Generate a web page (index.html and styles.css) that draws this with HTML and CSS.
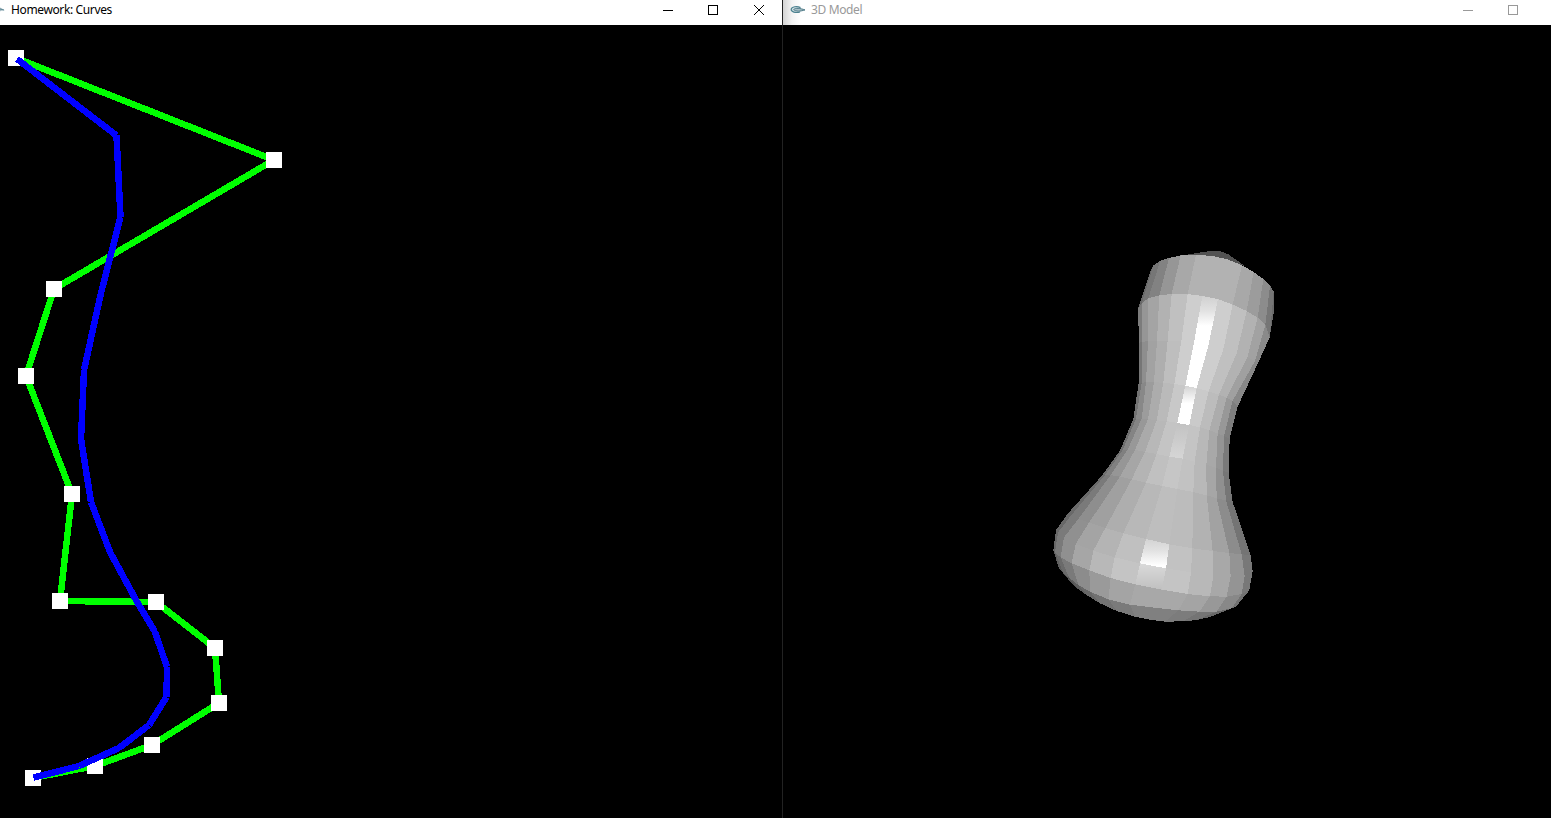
FILE: index.html
```
<!DOCTYPE html>
<html lang="en">
<head>
<meta charset="utf-8">
<title>Homework: Curves</title>
<link rel="stylesheet" href="styles.css">
</head>
<body>
<main class="desktop">
  <section class="window window-curves">
    <header class="titlebar">
      <svg class="app-icon" viewBox="0 0 16 16"><path d="M10.5 5.2 12.5 6.2 15.8 8.2 12 8.8 10.5 10Z" fill="#a3bac3"/><path d="M11 7 15 8" stroke="#5d8794" stroke-width="1"/></svg>
      <h1 class="title">Homework: Curves</h1>
      <div class="controls">
        <svg class="control" viewBox="0 0 45 18"><path d="M17 9.5h10"/></svg>
        <svg class="control" viewBox="0 0 45 18"><path d="M17.5 4.5h9v9h-9z"/></svg>
        <svg class="control control-close" viewBox="0 0 46 18"><path d="M18 4 28 14M28 4 18 14"/></svg>
      </div>
    </header>
    <svg class="canvas" id="curves" viewBox="0 25 782 793"></svg>
  </section>
  <section class="window window-model">
    <header class="titlebar titlebar-inactive">
      <svg class="app-icon" viewBox="0 0 16 16"><path d="M10.5 5.6C7 3.8 1.6 4.6 1.2 7.2 1 9.8 5.5 11.3 10 10" fill="#d3e2e6" stroke="#4c8290" stroke-width="1.2"/><path d="M3.6 7.6C5.5 5.6 10 6.2 15 7.9 10.5 9.4 6 9.8 3.6 7.6Z" fill="#a9bfc7" stroke="#4f7b88" stroke-width="1"/></svg>
      <h1 class="title">3D Model</h1>
      <div class="controls">
        <svg class="control" viewBox="0 0 45 18"><path d="M17 9.5h10"/></svg>
        <svg class="control" viewBox="0 0 45 18"><path d="M17.5 4.5h9v9h-9z"/></svg>
      </div>
    </header>
    <svg class="canvas" id="model" viewBox="783 25 768 793">
      <defs>
        <linearGradient id="shine-top" x2="0" y2="1"><stop stop-color="#d0d0d0"/><stop offset=".3" stop-color="#e2e2e2"/><stop offset=".6" stop-color="#fff"/></linearGradient>
        <linearGradient id="shine-mid" x2="0" y2="1"><stop stop-color="#d2d2d2"/><stop offset=".45" stop-color="#fff"/></linearGradient>
        <linearGradient id="shine-neck" x2="0" y2="1"><stop stop-color="#c2c2c2"/><stop offset="1" stop-color="#d6d6d6"/></linearGradient>
        <linearGradient id="shine-base" x2="0" y2="1"><stop stop-color="#d3d3d3"/><stop offset=".4" stop-color="#e2e2e2"/><stop offset=".9" stop-color="#fff"/></linearGradient>
        <linearGradient id="shine-low" x2="0" y2="1"><stop stop-color="#dadada"/><stop offset="1" stop-color="#c0c0c0"/></linearGradient>
      </defs>
    </svg>
  </section>
</main>
<script src="scene.js"></script>
</body>
</html>
```
FILE: styles.css
```
* { box-sizing: border-box; }
body { margin: 0; background: #000; font-family: "Noto Sans", "Open Sans", sans-serif; }
.desktop { display: flex; width: 1551px; height: 818px; overflow: hidden; }
.window { display: flex; flex-direction: column; height: 818px; overflow: hidden; }
.window-curves { width: 782px; }
.window-model { width: 769px; border-left: 1px solid #222; }
.titlebar { display: flex; align-items: center; height: 25px; flex: none; padding-bottom: 6px; background: #fff; color: #000; }
.titlebar-inactive { color: #999; padding-left: 7px; background: linear-gradient(90deg, #d4d4d4 0, #f3f3f3 9px, #fff 18px); }
.app-icon { width: 16px; height: 16px; flex: none; fill: none; }
.window-curves .app-icon { margin-left: -11px; }
.title { margin: 0 0 0 6px; font-size: 12px; line-height: 18px; font-weight: 400; letter-spacing: -0.37px; white-space: nowrap; }
.titlebar-inactive .title { margin-left: 5px; }
.controls { display: flex; margin-left: auto; }
.titlebar-inactive .controls { margin-right: 15px; }
.control { width: 45px; height: 18px; fill: none; stroke: #000; stroke-width: 1; shape-rendering: crispEdges; }
.control-close { width: 46px; shape-rendering: auto; }
.titlebar-inactive .control { stroke: #999; }
.canvas { display: block; width: 100%; height: 793px; background: #000; shape-rendering: crispEdges; }
.hull { stroke: #0f0; stroke-width: 6.5; }
.curve { stroke: #00f; stroke-width: 6.5; }
.handle { fill: #fff; }
```
FILE: scene.js
```
const NS = "http://www.w3.org/2000/svg";
function add(parent, tag, attrs) {
  const node = document.createElementNS(NS, tag);
  for (const key in attrs) node.setAttribute(key, attrs[key]);
  parent.appendChild(node);
}

// Curve editor: control hull, handles, then the evaluated spline on top.
const control = [[16,58],[274,160],[54,289],[26,376],[72,494],[60,601],[156,602],[215,648],[219,703],[152,745],[95,766],[33,778]];
const spline = [[17,59],[116.5,135.5],[120.5,217],[101,293],[84,370],[81,439],[91,502],[110,552],[136,600],[155,632],[167,667],[166.5,697],[149,725],[119,748],[79,766],[33.5,777.5]];
const curves = document.getElementById("curves");
function segments(points, cls) {
  for (let i = 1; i < points.length; i++) {
    const [a, b] = [points[i - 1], points[i]];
    add(curves, "line", { x1: a[0], y1: a[1], x2: b[0], y2: b[1], class: cls });
  }
}
segments(control, "hull");
for (const [x, y] of control) add(curves, "rect", { x: x - 8, y: y - 8, width: 16, height: 16, class: "handle" });
segments(spline, "curve");

// Surface of revolution: one row of vertices per ring, left silhouette to right.
const at = (ox, oy, list) => list.map(([x, y]) => [ox + x / 3, oy + y / 3]);
const rings = [
  at(1120,240,[[92,92],[100,76],[121,62],[147,54],[182,46],[228,44],[277,48],[322,58],[366,76],[401,96],[430,117],[450,137],[461,155]]),
  at(1120,240,[[54,207],[65,190],[85,175],[118,166],[155,162],[203,162],[247,168],[294,177],[338,194],[380,213],[413,233],[436,255],[449,292]]),
  at(1120,240,[[57,308],[67,306],[84,303],[111,302],[143,302],[184,303],[222,307],[265,317],[310,328],[350,340],[382,352],[405,363],[417,363]]),
  at(1120,350,[[56,98],[65,98],[78,97],[102,97],[130,98],[163,102],[196,107],[230,114],[266,124],[297,134],[320,143],[338,152],[353,170]]),
  at(1120,350,[[40,207],[48,206],[65,206],[84,207],[110,211],[140,213],[172,219],[208,225],[240,232],[268,241],[293,250],[312,258],[329,266]]),
  at(1040,440,[[240,32],[248,30],[263,29],[285,30],[315,36],[350,42],[388,50],[428,56],[464,65],[499,74],[528,83],[549,92],[566,98]]),
  at(1040,440,[[185,108],[195,105],[212,105],[240,110],[275,118],[318,128],[366,138],[412,147],[460,156],[500,166],[530,175],[558,181],[578,186]]),
  at(1040,520,[[84,-20],[92,-12],[115,-3],[147,8],[196,24],[250,40],[318,57],[388,73],[457,85],[518,93],[568,99],[605,103],[632,105]]),
  at(1040,520,[[48,30],[54,37],[72,52],[107,72],[160,92],[224,112],[300,130],[378,145],[453,157],[520,166],[572,169],[614,168],[638,153]]),
  at(1040,520,[[40,92],[45,98],[62,112],[95,130],[148,151],[212,174],[286,193],[365,209],[443,222],[510,229],[560,230],[605,222],[628,211]]),
  at(1040,520,[[58,148],[70,160],[87,173],[115,195],[150,215],[205,238],[270,254],[343,263],[415,271],[478,275],[530,275],[575,265],[588,260]]),
  at(1040,520,[[80,170],[95,190],[115,208],[140,225],[180,250],[230,273],[285,290],[330,299],[375,305],[430,304],[470,300],[510,291],[588,260]])
];
const shades = [
  [104,118,130,150,168,178,178,178,168,156,140,118],
  [124,150,164,178,192,206,"shine-top",206,192,178,162,138],
  [118,142,162,174,190,206,255,206,192,178,160,136],
  [114,136,156,172,186,200,"shine-mid",202,188,172,152,126],
  [110,132,152,170,184,196,"shine-neck",196,184,168,148,122],
  [110,128,150,166,180,192,198,194,184,166,144,118],
  [106,122,142,160,174,184,190,188,178,162,140,116],
  [104,122,144,164,180,192,"shine-base",194,184,168,148,120],
  [104,122,144,166,184,196,"shine-low",196,184,168,148,120],
  [94,106,122,140,154,164,168,168,164,152,136,114],
  [76,84,94,104,114,122,128,128,124,116,104,90]
];
const model = document.getElementById("model");
const poly = (points, fill) => add(model, "polygon", { points: points.map(p => p.join(",")).join(" "), fill });
// Far side of the open rim and the outer silhouette sit behind the facets.
poly(at(1120,240,[[200,44],[250,36],[275,33],[300,33],[325,43],[375,78],[320,64],[270,52]]), "#525252");
poly(at(1120,240,[[461,155],[461,220],[448,295],[430,255],[435,140]]), "#6a6a6a");
shades.forEach((row, r) => row.forEach((shade, s) => {
  const fill = typeof shade === "string" ? `url(#${shade})` : `rgb(${shade},${shade},${shade})`;
  poly([rings[r][s], rings[r][s + 1], rings[r + 1][s + 1], rings[r + 1][s]], fill);
}));
```
